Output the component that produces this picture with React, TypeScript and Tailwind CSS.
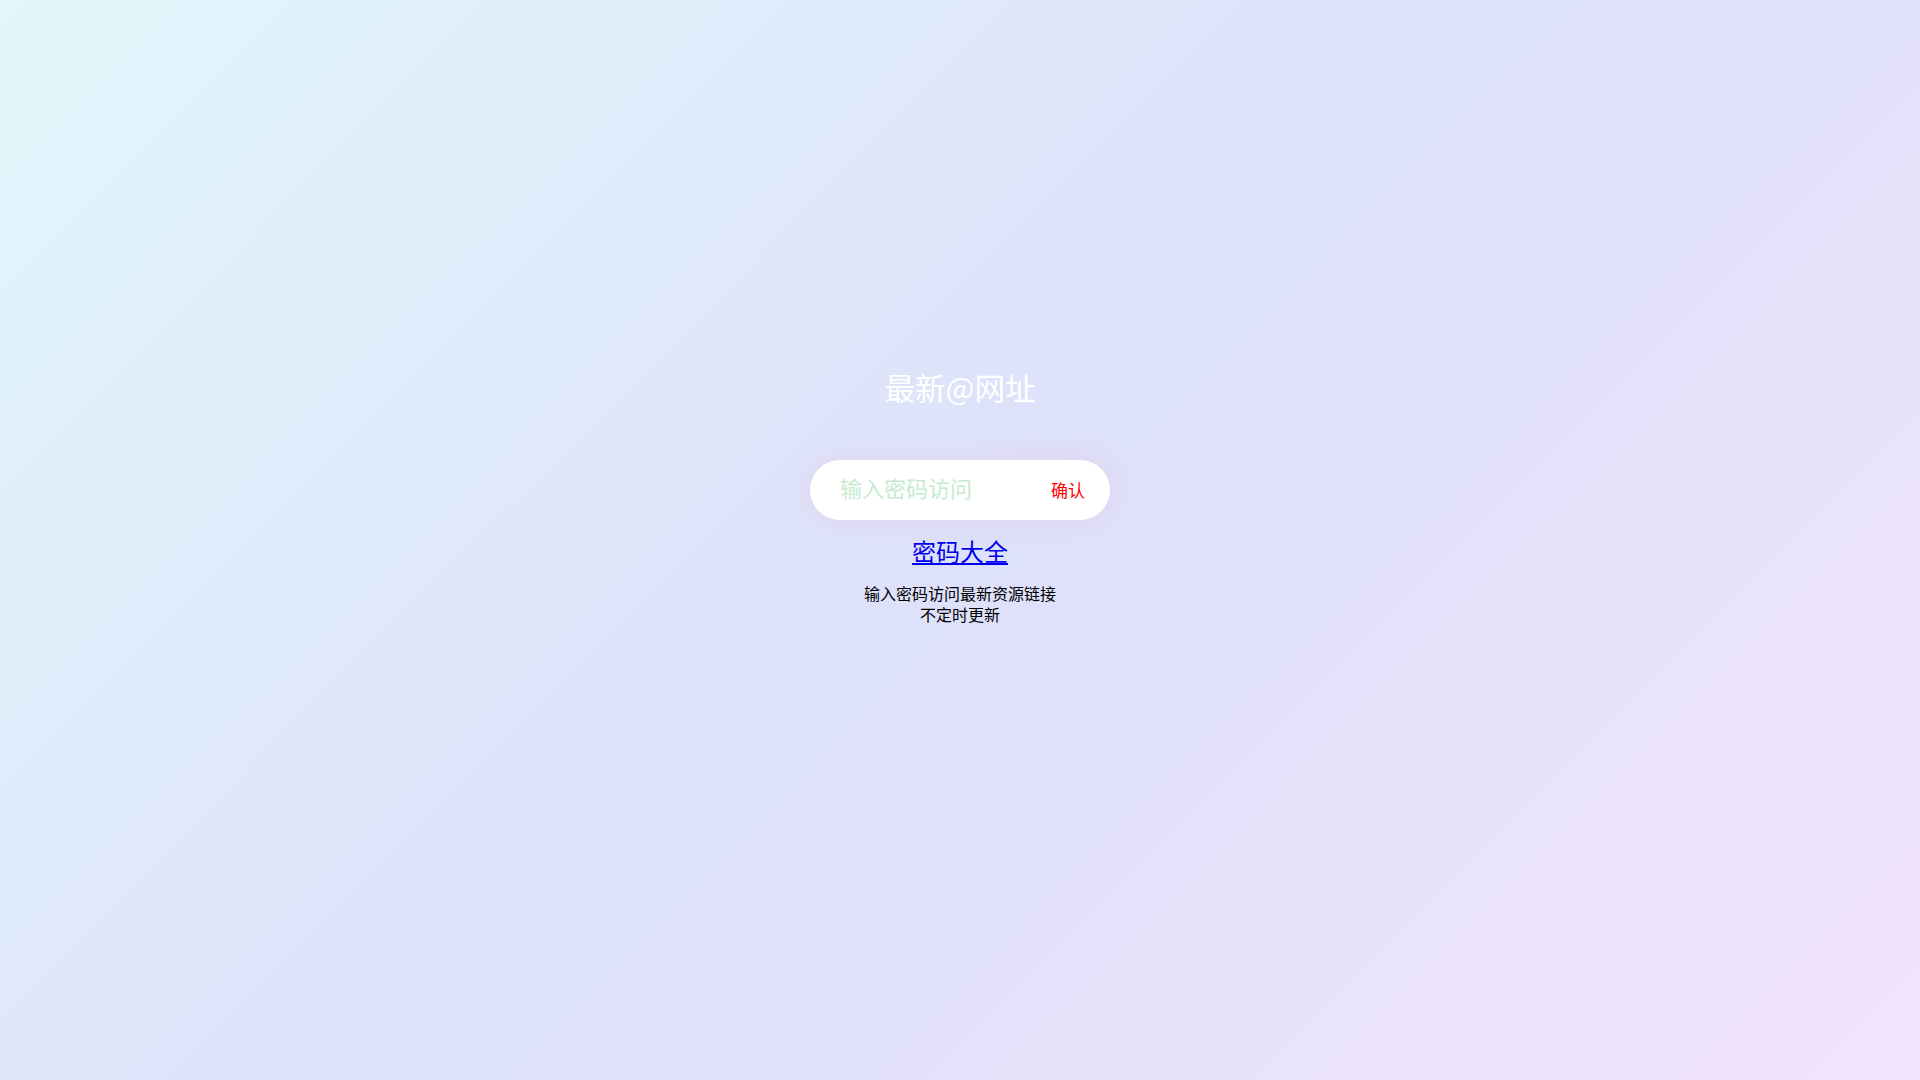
import React from "react";

export default function App() {
  return (
    <div
      className="w-full h-[1080px] overflow-hidden bg-[linear-gradient(135deg,#e1f7fb_0%,#dde1fa_50%,#f1e3fb_100%)] flex flex-col items-center pt-[367px]"
      style={{ fontFamily: '"Noto Sans CJK SC", "Noto Sans", sans-serif' }}
    >
      <h1 className="text-[30.5px] leading-[40px] text-white font-normal">最新@网址</h1>
      <div className="mt-[53px] w-[300px] h-[60px] rounded-[30px] bg-white shadow-[0_0_22px_rgba(235,190,225,0.55)] flex items-center pl-[30px] pr-[25px]">
        <input
          type="password"
          placeholder="输入密码访问"
          className="flex-1 min-w-0 bg-transparent outline-none border-none text-[22px] pb-[5px] placeholder:text-[#c6ead0] text-gray-800"
          style={{ fontFamily: '"Noto Sans CJK SC", "Noto Sans", sans-serif' }}
        />
        <button className="text-[17px] text-[#ff0000] bg-transparent border-none cursor-pointer" style={{ fontFamily: '"Noto Sans CJK SC", "Noto Sans", sans-serif' }}>
          确认
        </button>
      </div>
      <a href="#" className="mt-[15px] text-[24px] leading-[32px] text-[#0000ee] underline">
        密码大全
      </a>
      <div className="mt-[16px] text-[16px] leading-[21px] text-black text-center">
        <p>输入密码访问最新资源链接</p>
        <p>不定时更新</p>
      </div>
    </div>
  );
}
